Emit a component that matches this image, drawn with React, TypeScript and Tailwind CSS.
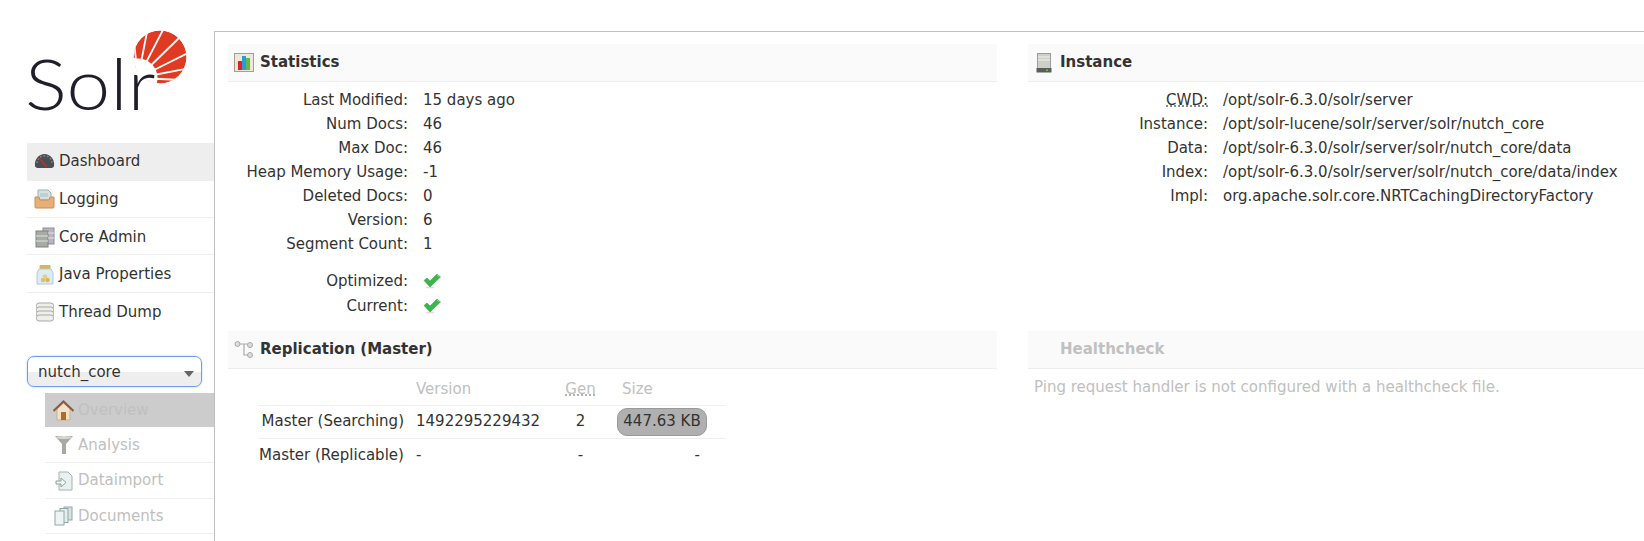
function LogoMark() {
  const f = { x: 138, y: 78 };
  const ends = [
    [134, 42],
    [147, 32],
    [164, 28],
    [179, 38],
    [190, 52],
    [190, 68],
    [182, 80],
  ];
  return (
    <svg className="absolute left-0 top-0" width="214" height="100" viewBox="0 0 214 100">
      <defs>
        <clipPath id="sun">
          <circle cx="160" cy="57" r="26.5" />
        </clipPath>
      </defs>
      <g clipPath="url(#sun)">
        <circle cx="160" cy="57" r="26.5" fill="#e03a22" />
        <circle cx={f.x} cy={f.y} r="19.5" fill="#fff" />
        <rect x="125" y="58" width="10" height="30" fill="#fff" />
        <polygon points="128,86 190,86 190,83 162,84 150,84" fill="#fff" />
        {ends.map(([x, y]) => (
          <line key={x} x1={f.x} y1={f.y} x2={x} y2={y} stroke="#fff" strokeWidth="1.8" />
        ))}
      </g>
    </svg>
  );
}

function Gauge() {
  return (
    <svg width="21" height="16" viewBox="0 0 21 16">
      <path d="M1 13C0 6 5 1 10.500 1S21 6 20 13c-.3 1.600-2 2-3 2H4c-1 0-2.700-.4-3-2z" fill="#4a4d52" />
      <path d="M3 10C3 6 6 3 10.500 3S18 6 18 10" fill="none" stroke="#85888c" strokeWidth="1.500" strokeDasharray="1.500 2" />
      <path d="M5 5l8 9" stroke="#b8342a" strokeWidth="1.500" />
    </svg>
  );
}

function Inbox() {
  return (
    <svg width="21" height="20" viewBox="0 0 21 20">
      <path d="M4 1h10l3 3v7H4z" fill="#d5e0e2" stroke="#9fb0b2" />
      <path d="M6 5h8M6 7h8" stroke="#a9c0c5" />
      <path d="M1 8h4l1 3h9l1-3h4v10a1 1 0 0 1-1 1H2a1 1 0 0 1-1-1z" fill="#e8ae78" stroke="#c98c55" />
    </svg>
  );
}

function Servers() {
  return (
    <svg width="20" height="21" viewBox="0 0 20 21">
      <rect x="8" y="1" width="11" height="16" fill="#b9b6c4" stroke="#8d8b96" />
      <rect x="1" y="4" width="12" height="16" fill="#a8aaa6" stroke="#80827e" />
      <path d="M1 9h12M1 14h12M13 6h6M13 11h6" stroke="#e1e3df" />
    </svg>
  );
}

function Jar() {
  return (
    <svg width="20" height="22" viewBox="0 0 20 22">
      <rect x="4.500" y="1" width="11" height="4" rx="1" fill="#d8b45a" />
      <path d="M4 5h12l2 4v11H2V9z" fill="#dcecf5" stroke="#b5c8d2" />
      <circle cx="8" cy="16" r="2.200" fill="#e0bf6d" />
      <circle cx="12.500" cy="16" r="2.200" fill="#d8b45a" />
      <circle cx="10" cy="12.500" r="2.200" fill="#e8cd85" />
    </svg>
  );
}

function Stack() {
  return (
    <svg width="20" height="21" viewBox="0 0 20 21">
      {[1, 5, 9, 13].map((y) => (
        <rect key={y} x="1.500" y={y} width="17" height="6" rx="2.500" fill="#eeeeea" stroke="#a9aaa6" />
      ))}
    </svg>
  );
}

function House() {
  return (
    <svg width="21" height="21" viewBox="0 0 21 21">
      <path d="M4 9l6.500-6L17 9v11H4z" fill="#f3e2c8" stroke="#c8b090" />
      <path d="M0.500 11L10.500 1.500 20.500 11" fill="none" stroke="#8a5a44" strokeWidth="2" />
      <rect x="8" y="12" width="5" height="8" fill="#b26a2c" />
    </svg>
  );
}

function Funnel() {
  return (
    <svg width="20" height="20" viewBox="0 0 20 20">
      <path d="M1 1h18l-7 8v10H8V9z" fill="#a8a8a4" />
      <ellipse cx="10" cy="2.500" rx="8" ry="1.500" fill="#d8d8d4" />
    </svg>
  );
}

function ImportDoc() {
  return (
    <svg width="18" height="20" viewBox="0 0 18 20">
      <path d="M4 1h9l4 4v14H4z" fill="#e8f1ef" stroke="#9fb5b0" />
      <path d="M1 10h5V7l5 4.500L6 16v-3H1z" fill="#f4f8f7" stroke="#8aa29c" />
    </svg>
  );
}

function Docs() {
  return (
    <svg width="19" height="20" viewBox="0 0 19 20">
      <rect x="10" y="1" width="8" height="13" fill="#d5e4e3" stroke="#91a8a5" />
      <rect x="6" y="2.500" width="8" height="14" fill="#e2eeed" stroke="#91a8a5" />
      <rect x="1" y="5" width="9" height="14" fill="#edf5f4" stroke="#91a8a5" />
    </svg>
  );
}

function Chart() {
  return (
    <svg width="20" height="19" viewBox="0 0 20 19">
      <rect x="0.500" y="0.500" width="19" height="18" fill="#f0e8d6" stroke="#a89e8a" />
      <rect x="4" y="8" width="4" height="9" fill="#e0202c" />
      <rect x="8" y="3" width="4" height="14" fill="#2f9ad8" />
      <rect x="12" y="5" width="4" height="12" fill="#66b84a" />
    </svg>
  );
}

function Tower() {
  return (
    <svg width="16" height="20" viewBox="0 0 16 20">
      <rect x="1.500" y="0.500" width="13" height="15" fill="#cfcfca" stroke="#9c9c98" />
      <path d="M2 4h12M2 7h12" stroke="#f0f0ee" />
      <rect x="0.500" y="15" width="15" height="4.500" fill="#5a5d5a" />
      <rect x="10" y="16.500" width="2" height="1.500" fill="#6cc04a" />
    </svg>
  );
}

function Branch() {
  return (
    <svg width="20" height="18" viewBox="0 0 20 18">
      <path d="M5 3h5v11h5M10 3h5" fill="none" stroke="#aaa" strokeWidth="1.200" />
      <circle cx="3.500" cy="3" r="2.500" fill="#ddd" stroke="#aaa" />
      <circle cx="16" cy="4" r="2.500" fill="#ddd" stroke="#aaa" />
      <circle cx="16" cy="14" r="2.500" fill="#ddd" stroke="#aaa" />
    </svg>
  );
}

function Check() {
  return (
    <svg width="18" height="16" viewBox="0 0 18 16" className="block">
      <path d="M3 14.500h8" stroke="#ddd" strokeWidth="1.500" />
      <path d="M1 7.500l3-2.500 3 3 7-7 3.500 3L7 14z" fill="#3cb54a" stroke="#2f9a3c" strokeWidth="0.500" />
      <path d="M14 2l2.500 2" stroke="#8fdc8f" />
    </svg>
  );
}

const mainNav = [
  { label: 'Dashboard', Icon: Gauge, active: true, h: 'h-[38px] pb-[2px]' },
  { label: 'Logging', Icon: Inbox, active: false, h: 'h-[37px]' },
  { label: 'Core Admin', Icon: Servers, active: false, h: 'h-[37px] pt-[2px]' },
  { label: 'Java Properties', Icon: Jar, active: false, h: 'h-[38px] pt-[2px]' },
  { label: 'Thread Dump', Icon: Stack, active: false, h: 'h-[38px]' },
];

const coreNav = [
  { label: 'Overview', Icon: House, active: true, h: 'h-[34px]' },
  { label: 'Analysis', Icon: Funnel, active: false, h: 'h-[36px] pt-[1px]' },
  { label: 'Dataimport', Icon: ImportDoc, active: false, h: 'h-[36px]' },
  { label: 'Documents', Icon: Docs, active: false, h: 'h-[35px]' },
];

const stats = [
  ['Last Modified:', '15 days ago'],
  ['Num Docs:', '46'],
  ['Max Doc:', '46'],
  ['Heap Memory Usage:', '-1'],
  ['Deleted Docs:', '0'],
  ['Version:', '6'],
  ['Segment Count:', '1'],
];

const instance = [
  ['CWD:', '/opt/solr-6.3.0/solr/server'],
  ['Instance:', '/opt/solr-lucene/solr/server/solr/nutch_core'],
  ['Data:', '/opt/solr-6.3.0/solr/server/solr/nutch_core/data'],
  ['Index:', '/opt/solr-6.3.0/solr/server/solr/nutch_core/data/index'],
  ['Impl:', 'org.apache.solr.core.NRTCachingDirectoryFactory'],
];

function BlockHeader({ title, muted, children }: { title: string; muted?: boolean; children?: React.ReactNode }) {
  return (
    <div className="flex h-[38px] items-center border-b border-[#eee] bg-[#fafafa] pl-[5px]">
      <span className="flex w-[27px] justify-center pr-[6px]">{children}</span>
      <h2 className={`font-bold ${muted ? 'text-[#c0c0c0]' : 'text-[#333]'}`}>{title}</h2>
    </div>
  );
}

function Row({ label, value, dotted }: { label: string; value: React.ReactNode; dotted?: boolean }) {
  return (
    <div className="flex h-[24px] items-center">
      <div className="w-[180px] text-right whitespace-nowrap">
        <span className={dotted ? 'underline decoration-dotted decoration-[#666]' : ''}>{label}</span>
      </div>
      <div className="pl-[15px] whitespace-nowrap">{value}</div>
    </div>
  );
}

export default function App() {
  return (
    <div className="flex h-[541px] w-[1644px] overflow-hidden bg-white font-['DejaVu_Sans',sans-serif] text-[15px] text-[#333]">
      <aside className="w-[214px] shrink-0 pl-[27px]">
        <div className="relative -ml-[27px] h-[143px] w-[214px]">
          <LogoMark />
          <span className="absolute left-[25px] top-[38px] origin-left scale-x-[1.12] font-['Lato',sans-serif] text-[70px] leading-[90px] font-light text-[#1f1f2b]">
            Solr
          </span>
        </div>
        <nav>
          {mainNav.map(({ label, Icon, active, h }, i) => (
            <div
              key={label}
              className={`flex ${h} items-center pl-[6px] ${active ? 'bg-[#eee]' : ''} ${i > 0 && i < 4 ? 'border-b border-[#eee]' : ''}`}
            >
              <span className="flex w-[23px] justify-center">
                <Icon />
              </span>
              <span className="pl-[3px]">{label}</span>
            </div>
          ))}
        </nav>
        <div className="mt-[25px] flex h-[31px] w-[175px] items-center justify-between rounded-[7px] border border-[#6a9ff0] bg-gradient-to-b from-white from-50% to-[#eee] to-50% pr-[7px] pl-[10px] shadow-[0_0_2px_#9cc0f5]">
          <span className="pt-[2px]">nutch_core</span>
          <span className="mt-[4px] h-0 w-0 border-x-[5px] border-t-[6px] border-x-transparent border-t-[#666]" />
        </div>
        <nav className="mt-[6px] ml-[18px] text-[#c0c0c0]">
          {coreNav.map(({ label, Icon, active, h }) => (
            <div key={label} className={`flex ${h} items-center pl-[8px] ${active ? 'bg-[#ccc]' : 'border-b border-[#eee]'}`}>
              <span className="flex w-[21px] justify-center">
                <Icon />
              </span>
              <span className="pl-[4px]">{label}</span>
            </div>
          ))}
        </nav>
      </aside>
      <main className="mt-[31px] grid flex-1 grid-cols-[769px_769px] content-start gap-x-[31px] overflow-hidden border-t border-l border-[#c0c0c0] pt-[12px] pl-[13px]">
        <section className="h-[287px]">
          <BlockHeader title="Statistics">
            <Chart />
          </BlockHeader>
          <div className="pt-[6px]">
            {stats.map(([label, value]) => (
              <Row key={label} label={label} value={value} />
            ))}
            <div className="mt-[13px] flex flex-col gap-[1px]">
              <Row label="Optimized:" value={<Check />} />
              <Row label="Current:" value={<Check />} />
            </div>
          </div>
        </section>
        <section>
          <BlockHeader title="Instance">
            <Tower />
          </BlockHeader>
          <div className="pt-[6px]">
            {instance.map(([label, value]) => (
              <Row key={label} label={label} value={value} dotted={label === 'CWD:'} />
            ))}
          </div>
        </section>
        <section>
          <BlockHeader title="Replication (Master)">
            <Branch />
          </BlockHeader>
          <table className="ml-[31px] w-[466px] table-fixed border-collapse">
            <colgroup>
              <col className="w-[153px]" />
              <col className="w-[142px]" />
              <col className="w-[53px]" />
              <col className="w-[118px]" />
            </colgroup>
            <thead>
              <tr className="h-[36px] text-[#c0c0c0]">
                <th />
                <th className="pt-[4px] pl-[4px] text-left font-normal">Version</th>
                <th className="pt-[4px] text-center font-normal">
                  <span className="underline decoration-dotted decoration-[#999]">Gen</span>
                </th>
                <th className="pt-[4px] pl-[15px] text-left font-normal">Size</th>
              </tr>
            </thead>
            <tbody>
              <tr className="h-[33px] border-t border-[#eee]">
                <td className="pr-[8px] text-right whitespace-nowrap">Master (Searching)</td>
                <td className="pl-[4px]">1492295229432</td>
                <td className="text-center">2</td>
                <td className="pl-[10px]">
                  <span className="flex h-[28px] w-[90px] items-center justify-center rounded-[10px] border border-[#999] bg-[#b0b0b0] whitespace-nowrap">
                    447.63 KB
                  </span>
                </td>
              </tr>
              <tr className="h-[33px] border-t border-[#eee]">
                <td className="pr-[9px] text-right whitespace-nowrap">Master (Replicable)</td>
                <td className="pl-[4px]">-</td>
                <td className="text-center">-</td>
                <td className="pr-[25px] text-right">-</td>
              </tr>
            </tbody>
          </table>
        </section>
        <section>
          <BlockHeader title="Healthcheck" muted />
          <p className="pt-[6px] pl-[6px] leading-[24px] text-[#c0c0c0]">Ping request handler is not configured with a healthcheck file.</p>
        </section>
      </main>
    </div>
  );
}
